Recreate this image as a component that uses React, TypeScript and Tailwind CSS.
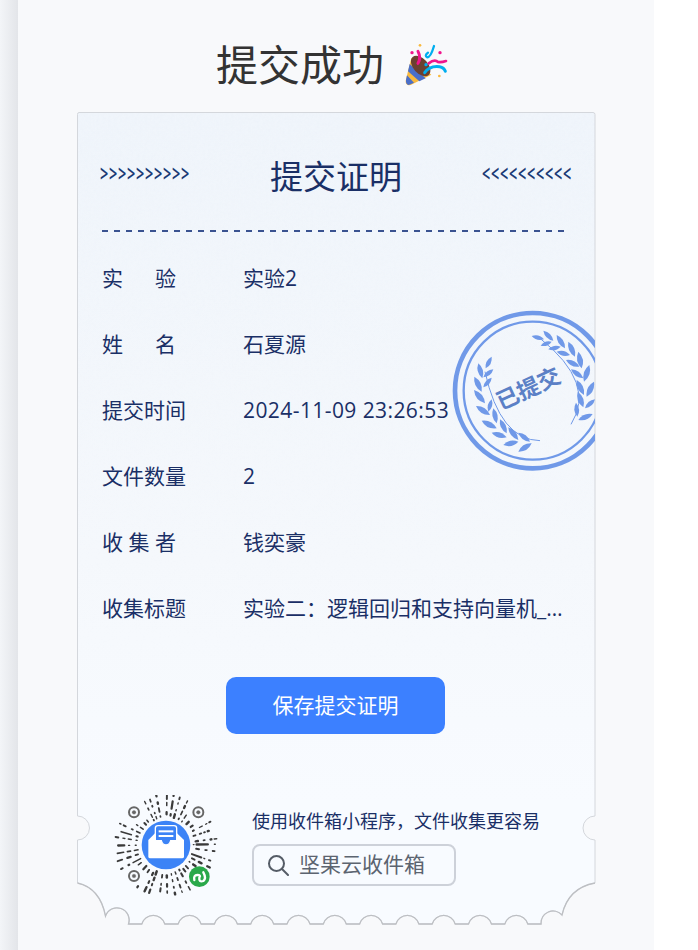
const FONT = "font-['Open_Sans','Noto_Sans_CJK_SC','Noto_Sans',sans-serif]";

const rows = [
  { label: ["实", "验"], value: "实验2", wide: false },
  { label: ["姓", "名"], value: "石夏源", wide: false },
  { label: ["提交时间"], value: "2024-11-09 23:26:53", wide: true },
  { label: ["文件数量"], value: "2", wide: false },
  { label: ["收", "集", "者"], value: "钱奕豪", wide: false },
  { label: ["收集标题"], value: "实验二\uFF1A逻辑回归和支持向量机_实验报告", wide: false },
];

// bottom edge of the ticket, right to left
const scallops = () => {
  let d = "";
  for (let n = 12; n >= 0; n--) {
    const c = 40 + 36.3 * n;
    const endY = n === 0 ? 804 : 812;
    if (n === 12) d += `A12 12 0 0 0 ${c - 11.5} 812`;
    else d += `H${c + 11.5}A12 12 0 0 0 ${c - 11.5} ${endY}`;
  }
  return d;
};

const ticketPath = `M2 .5H516Q518 .5 518 2.5V704A12 12 0 0 0 518 728V771Q491 776 485 803${scallops()}Q23 776 .5 771V728A12 12 0 0 0 .5 704V2.5Q.5 .5 2 .5Z`;
const bottomPath = `M518 771Q491 776 485 803${scallops()}Q23 776 .5 771`;

const TicketShape = () => (
  <svg className="absolute inset-0 overflow-visible" width="519" height="814" viewBox="0 0 519 814">
    <defs>
      <linearGradient id="paper" x1="0" y1="0" x2="0" y2="1">
        <stop offset="0" stopColor="#f0f5fb" />
        <stop offset="0.55" stopColor="#f5f8fc" />
        <stop offset="0.85" stopColor="#f8fbff" />
      </linearGradient>
      <linearGradient id="fade" x1="0" y1="0" x2="0" y2="1">
        <stop offset="0" stopColor="#fff" stopOpacity="1" />
        <stop offset="0.7" stopColor="#fff" stopOpacity="0" />
      </linearGradient>
      <mask id="fadeMask">
        <rect width="519" height="814" fill="url(#fade)" />
      </mask>
      <filter id="grain" x="0" y="0" width="100%" height="100%">
        <feTurbulence type="fractalNoise" baseFrequency="0.35" numOctaves="2" seed="4" />
        <feColorMatrix values="0 0 0 0 0.7  0 0 0 0 0.77  0 0 0 0 0.86  0 0 0 0.5 -0.12" />
      </filter>
      <clipPath id="ticketClip">
        <path d={ticketPath} />
      </clipPath>
    </defs>
    <path d={ticketPath} fill="url(#paper)" />
    <g clipPath="url(#ticketClip)" mask="url(#fadeMask)">
      <rect width="519" height="814" filter="url(#grain)" opacity="0.2" />
    </g>
    <path d={ticketPath} fill="none" stroke="#d4d7dc" strokeWidth="1" />
    <path d={bottomPath} fill="none" stroke="#bdbfc3" strokeWidth="1.3" />
  </svg>
);

const Leaf = ({ b, t, w = 0.34 }: { b: number[]; t: number[]; w?: number }) => {
  const mx = (b[0] + t[0]) / 2;
  const my = (b[1] + t[1]) / 2;
  const nx = -(t[1] - b[1]) * w;
  const ny = (t[0] - b[0]) * w;
  return (
    <path d={`M${b[0]} ${b[1]}Q${mx + nx} ${my + ny} ${t[0]} ${t[1]}Q${mx - nx} ${my - ny} ${b[0]} ${b[1]}Z`} />
  );
};

const leftLeaves = [
  [137, 205, 155, 170], [127, 235, 115, 190], [130, 232, 160, 208], [125, 275, 103, 230],
  [130, 262, 155, 233], [135, 310, 102, 270], [145, 335, 155, 298], [150, 345, 108, 318],
  [170, 370, 160, 325], [170, 385, 125, 362], [200, 400, 180, 358], [200, 412, 155, 398],
  [235, 420, 205, 382], [235, 425, 190, 435], [270, 425, 235, 398], [275, 430, 235, 455],
];
const rightLeaves = [
  [312, 118, 275, 108], [340, 122, 310, 92], [335, 125, 302, 137], [375, 145, 350, 105],
  [362, 140, 325, 148], [405, 170, 385, 125], [390, 165, 350, 155], [425, 205, 415, 155],
  [418, 200, 378, 180], [432, 245, 448, 195], [430, 235, 393, 208], [440, 290, 462, 245],
  [432, 285, 410, 240], [435, 325, 465, 298], [430, 322, 413, 275], [412, 350, 408, 308],
  [415, 360, 458, 342],
];

const Stamp = () => (
  <svg className="absolute left-[363px] top-[188px]" width="155" height="180" viewBox="0 0 465 540">
    <circle cx="278" cy="272" r="233" fill="none" stroke="#7099e8" strokeWidth="14" />
    <circle cx="278" cy="272" r="207" fill="none" stroke="#7099e8" strokeWidth="7" />
    <g fill="#7099e8">
      {leftLeaves.map((l, i) => (
        <Leaf key={i} b={[l[0], l[1]]} t={[l[2], l[3]]} />
      ))}
      {rightLeaves.map((l, i) => (
        <Leaf key={i} b={[l[0], l[1]]} t={[l[2], l[3]]} />
      ))}
    </g>
    <path d="M300 422Q180 420 135 215" fill="none" stroke="#7099e8" strokeWidth="3" />
    <path d="M393 373Q470 250 300 115" fill="none" stroke="#7099e8" strokeWidth="3" />
    <text
      x="265"
      y="290"
      textAnchor="middle"
      transform="rotate(-25 265 265)"
      fontSize="68"
      fontWeight="700"
      fill="#5b80c6"
      fontFamily="'Noto Sans CJK SC', sans-serif"
    >
      已提交
    </text>
  </svg>
);

const Eye = ({ x, y }: { x: number; y: number }) => (
  <g fill="none" stroke="#666">
    <circle cx={x} cy={y} r="15" strokeWidth="6" />
    <circle cx={x} cy={y} r="5.5" fill="#666" strokeWidth="1" />
  </g>
);

const MiniCode = () => {
  const cx = 168;
  const cy = 150;
  const marks: { x1: number; y1: number; x2: number; y2: number; w: number; key: string }[] = [];
  const rnd = (n: number) => {
    const v = Math.sin(n * 12.9898) * 43758.5453;
    return v - Math.floor(v);
  };
  const spokes = 40;
  for (let i = 0; i < spokes; i++) {
    const a = ((i + (rnd(i + 50) - 0.5) * 0.5) / spokes) * Math.PI * 2;
    let r = 82 + rnd(i) * 10;
    let j = 0;
    while (r < 150) {
      const len = 2 + rnd(i * 31 + j) * (rnd(i * 7 + j) > 0.72 ? 34 : 9);
      const end = Math.min(r + len, 153);
      const x1 = cx + Math.cos(a) * r;
      const y1 = cy + Math.sin(a) * r;
      const x2 = cx + Math.cos(a) * end;
      const y2 = cy + Math.sin(a) * end;
      const nearEye = [[72, 52], [265, 52], [72, 243], [268, 245]].some(
        (e) => Math.hypot((x1 + x2) / 2 - e[0], (y1 + y2) / 2 - e[1]) < 32,
      );
      if (!nearEye) marks.push({ x1, y1, x2, y2, w: 4 + rnd(i * 3 + j) * 3.5, key: `${i}-${j}` });
      r = end + 8 + rnd(i + j * 13) * 12;
      j++;
    }
  }
  return (
    <svg className="shrink-0" width="110" height="105" viewBox="0 0 330 315">
      <g stroke="#3a3a3a" strokeLinecap="round" className="blur-[0.4px]">
        {marks.map((m) => (
          <line key={m.key} x1={m.x1} y1={m.y1} x2={m.x2} y2={m.y2} strokeWidth={m.w} />
        ))}
      </g>
      <Eye x={72} y={52} />
      <Eye x={265} y={52} />
      <Eye x={72} y={243} />
      <circle cx={cx} cy={cy} r="73" fill="#3c83f6" />
      <path d="M115 135L138 112H198L222 135V185Q222 190 216 190H121Q115 190 115 185Z" fill="#fff" />
      <path d="M136 100Q136 92 144 92H192Q200 92 200 100V137H182Q178 150 168 150Q158 150 154 137H136Z" fill="#3c83f6" stroke="#fff" strokeWidth="4" />
      <rect x="146" y="106" width="44" height="6" fill="#fff" />
      <rect x="146" y="120" width="44" height="6" fill="#fff" />
      <circle cx="268" cy="245" r="31" fill="#2aa84a" />
      <path d="M253 255Q250 240 262 240T268 248Q266 262 280 258Q290 250 280 232" fill="none" stroke="#fff" strokeWidth="7" strokeLinecap="round" />
    </svg>
  );
};

const Popper = () => (
  <svg className="shrink-0" width="44" height="44" viewBox="38 38 132 132">
    <path d="M60 86L120 136L58 167Q42 170 43 154Z" fill="#f9b93e" />
    <path d="M55 104L103 147L84 156L50 126Z" fill="#4a6fc9" />
    <path d="M47 138L68 160L52 167Q43 166 44 152Z" fill="#4a6fc9" />
    <ellipse cx="88" cy="110" rx="22" ry="36" transform="rotate(-42 88 110)" fill="#6b4030" />
    <path d="M80 66Q90 85 80 102" fill="none" stroke="#f0148c" strokeWidth="9" strokeLinecap="round" />
    <path d="M128 50Q118 84 108 84Q98 80 110 70" fill="none" stroke="#00aeef" strokeWidth="7" strokeLinecap="round" />
    <path d="M112 102Q130 88 140 98Q150 100 164 95" fill="none" stroke="#f0148c" strokeWidth="8" strokeLinecap="round" />
    <path d="M100 130Q115 108 145 112Q158 114 162 126" fill="none" stroke="#00aeef" strokeWidth="9" strokeLinecap="round" />
    <circle cx="62" cy="70" r="5" fill="#f0148c" />
    <circle cx="86" cy="48" r="4" fill="#f9b93e" />
    <circle cx="146" cy="70" r="5" fill="#f0148c" />
    <circle cx="104" cy="106" r="5" fill="#00aeef" />
    <circle cx="144" cy="140" r="4" fill="#f9b93e" />
  </svg>
);

const CHEVRONS = "w-[90px] origin-left -translate-y-[3px] scale-x-[0.6] whitespace-nowrap text-[24px] font-semibold tracking-[1.3px] text-[#1b3a75]";

export default function App() {
  return (
    <div className={`flex h-[950px] overflow-hidden bg-white ${FONT}`}>
      <div className="h-full w-[18px] bg-gradient-to-r from-[#f3f5f8] to-[#e3e5e9]" />
      <div className="h-full w-[636px] bg-[#f8f9fb]">
        <div className="mb-[23px] mt-[39px] flex h-[50px] items-center justify-center gap-[20px] pr-2">
          <h1 className="text-[42px] font-normal text-[#333333]">提交成功</h1>
          <Popper />
        </div>

        <div className="relative ml-[59px] h-[814px] w-[519px] text-[#1a2f66]">
          <TicketShape />
          <Stamp />
          <div className="relative">
            <div className="box-content flex h-[40px] items-center justify-between pl-[23px] pr-[24px] pt-[44px]">
              <span className={CHEVRONS}>{">>>>>>>>>>"}</span>
              <span className="translate-y-[1px] text-[33px] leading-[40px]">提交证明</span>
              <span className={CHEVRONS}>{"<<<<<<<<<<"}</span>
            </div>
            <div className="ml-[25px] mt-[34px] h-[2px] w-[464px] bg-[repeating-linear-gradient(90deg,#3a5290_0,#3a5290_6px,transparent_6px,transparent_12px)]" />
            <div className="mt-[14px] pl-[25px]">
              {rows.map((row) => (
                <div key={row.value} className="flex h-[66px] items-center text-[21px]">
                  <div className="w-[141px] shrink-0">
                    <span className="flex w-fit min-w-[74px] justify-between">
                      {row.label.map((t) => (
                        <span key={t}>{t}</span>
                      ))}
                    </span>
                  </div>
                  <span className={row.wide ? "w-[325px] truncate tracking-[0.42px]" : "w-[325px] truncate"}>
                    {row.value}
                  </span>
                </div>
              ))}
            </div>
            <button className="ml-[149px] mt-[35px] block h-[57px] w-[219px] rounded-[10px] bg-[#3c80ff] text-[21px] text-white">
              保存提交证明
            </button>
            <div className="ml-[33px] mt-[61px] flex gap-[32px]">
              <MiniCode />
              <div className="pt-[14px]">
                <p className="whitespace-nowrap text-[18px] leading-[24px]">{"使用收件箱小程序\uFF0C文件收集更容易"}</p>
                <div className="mt-[11px] flex h-[42px] w-[204px] items-center gap-[10px] rounded-[8px] border-2 border-[#cdd1d9] pl-[13px] text-[21px] text-[#5c6470]">
                  <svg width="22" height="22" viewBox="0 0 22 22" fill="none" stroke="#555c66" strokeWidth="2">
                    <circle cx="9.5" cy="9.5" r="7.5" />
                    <path d="M15 15l6 6" strokeLinecap="round" />
                  </svg>
                  <span>坚果云收件箱</span>
                </div>
              </div>
            </div>
          </div>
        </div>
      </div>
    </div>
  );
}
